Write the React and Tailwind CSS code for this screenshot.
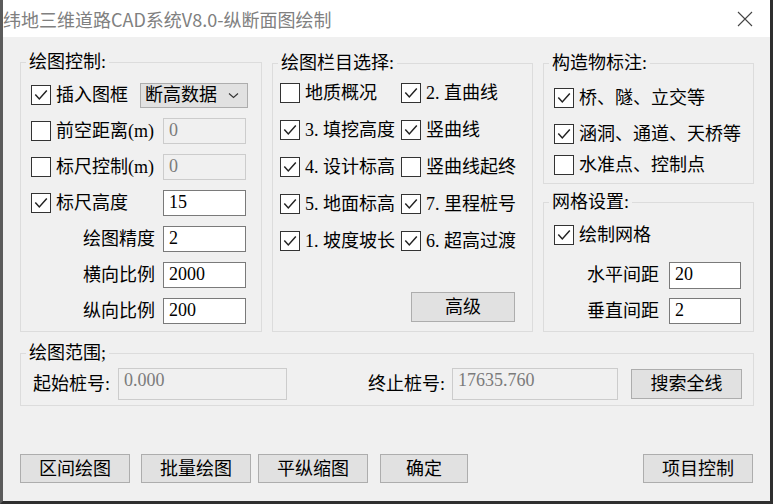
import React from "react";

function Box({ checked }) {
  return (
    <span className="w-[20px] h-[20px] border border-[#333333] bg-white flex items-center justify-center shrink-0">
      {checked && (
        <svg width="18" height="18" viewBox="0 0 18 18">
          <path d="M3.3 8.6 L7.3 13 L14.8 4.6" fill="none" stroke="#222222" strokeWidth="1.5" />
        </svg>
      )}
    </span>
  );
}

function Group({ title, className, children }) {
  return (
    <div className={`relative border border-[#dcdcdc] ${className}`}>
      <span className="absolute left-[5px] top-[-10px] px-[3px] bg-[#f0f0f0] text-[18px] leading-[18px] whitespace-nowrap">
        {title}
      </span>
      {children}
    </div>
  );
}

function Field({ value, disabled, className = "" }) {
  return (
    <div
      className={`h-[26px] border flex items-center pl-[5px] pb-[3px] text-[18px] leading-[18px] shrink-0 ${
        disabled ? "bg-[#f0f0f0] border-[#cccccc] text-[#7b7b7b]" : "bg-white border-[#7a7a7a] text-black"
      } ${className}`}
    >
      {value}
    </div>
  );
}

function Check({ checked, label }) {
  return (
    <div className="flex items-center h-[20px]">
      <Box checked={checked} />
      <span className="ml-[5px] text-[18px] leading-[20px] whitespace-nowrap">{label}</span>
    </div>
  );
}

function Btn({ children, className = "" }) {
  return (
    <div
      className={`bg-[#e1e1e1] border border-[#adadad] flex items-center justify-center text-[18px] leading-[18px] shrink-0 ${className}`}
    >
      {children}
    </div>
  );
}

export default function App() {
  return (
    <div className="w-[773px] h-[504px] bg-[#f0f0f0] flex flex-col border-l-[3px] border-r-[3px] border-b-[3px] border-l-[#5b5b5b] border-r-[#2f2f2f] border-b-[#2f2f2f] text-black font-['Liberation_Serif','Noto_Sans_CJK_SC',serif] overflow-hidden">
      {/* Title bar */}
      <div className="h-[37px] bg-white flex items-center shrink-0 pr-[17px]">
        <span className="text-[18px] leading-[20px] text-[#808080] font-['Noto_Sans_CJK_SC',sans-serif] whitespace-nowrap">
          纬地三维道路CAD系统V8.0-纵断面图绘制
        </span>
        <svg className="ml-auto" width="16" height="16" viewBox="0 0 16 16">
          <path d="M1 1 L15 15 M15 1 L1 15" stroke="#444444" strokeWidth="1.1" fill="none" />
        </svg>
      </div>

      {/* Body */}
      <div className="flex-1 flex flex-col pl-[17px] pr-[16px] pt-[25px]">
        <div className="flex h-[270px] shrink-0">
          {/* 绘图控制 */}
          <Group title="绘图控制:" className="w-[242px] h-[270px] shrink-0">
            <div className="flex flex-col gap-[10px] pt-[19px] pl-[10px] pr-[15px]">
              <div className="flex items-center h-[26px]">
                <Check checked label="插入图框" />
                <div className="ml-auto mr-[-2px] w-[108px] h-[25px] bg-[#e1e1e1] border border-[#adadad] flex items-center pl-[4px] pr-[8px] text-[18px] leading-[18px]">
                  <span>断高数据</span>
                  <svg className="ml-auto" width="11" height="7" viewBox="0 0 11 7">
                    <path d="M1 1.5 L5.5 5.5 L10 1.5" stroke="#333333" strokeWidth="1.1" fill="none" />
                  </svg>
                </div>
              </div>
              <div className="flex items-center h-[26px]">
                <Check label="前空距离(m)" />
                <Field value="0" disabled className="ml-auto w-[83px]" />
              </div>
              <div className="flex items-center h-[26px]">
                <Check label="标尺控制(m)" />
                <Field value="0" disabled className="ml-auto w-[83px]" />
              </div>
              <div className="flex items-center h-[26px]">
                <Check checked label="标尺高度" />
                <Field value="15" className="ml-auto w-[83px]" />
              </div>
              <div className="flex items-center justify-end h-[26px] gap-[8px]">
                <span className="text-[18px] leading-[20px]">绘图精度</span>
                <Field value="2" className="w-[83px]" />
              </div>
              <div className="flex items-center justify-end h-[26px] gap-[8px]">
                <span className="text-[18px] leading-[20px]">横向比例</span>
                <Field value="2000" className="w-[83px]" />
              </div>
              <div className="flex items-center justify-end h-[26px] gap-[8px]">
                <span className="text-[18px] leading-[20px]">纵向比例</span>
                <Field value="200" className="w-[83px]" />
              </div>
            </div>
          </Group>

          {/* 绘图栏目选择 */}
          <Group title="绘图栏目选择:" className="ml-[10px] mt-[1px] w-[261px] h-[269px] shrink-0 flex flex-col">
            <div className="grid grid-cols-[121px_auto] gap-y-[17px] pt-[19px] pl-[7px]">
              <Check label="地质概况" />
              <Check checked label="2. 直曲线" />
              <Check checked label="3. 填挖高度" />
              <Check checked label="竖曲线" />
              <Check checked label="4. 设计标高" />
              <Check label="竖曲线起终" />
              <Check checked label="5. 地面标高" />
              <Check checked label="7. 里程桩号" />
              <Check checked label="1. 坡度坡长" />
              <Check checked label="6. 超高过渡" />
            </div>
            <Btn className="mt-auto self-end mr-[17px] mb-[9px] w-[104px] h-[30px]">高级</Btn>
          </Group>

          {/* Right column */}
          <div className="ml-[10px] w-[211px] flex flex-col shrink-0">
            <Group title="构造物标注:" className="mt-[1px] h-[121px]">
              <div className="flex flex-col pt-[24px] pl-[10px]">
                <Check checked label="桥、隧、立交等" />
                <div className="mt-[16px]">
                  <Check checked label="涵洞、通道、天桥等" />
                </div>
                <div className="mt-[11px]">
                  <Check label="水准点、控制点" />
                </div>
              </div>
            </Group>
            <Group title="网格设置:" className="mt-[18px] h-[130px]">
              <div className="flex flex-col pt-[22px] pl-[10px] pr-[12px]">
                <Check checked label="绘制网格" />
                <div className="mt-[17px] flex items-center justify-end h-[26px] gap-[10px]">
                  <span className="text-[18px] leading-[20px]">水平间距</span>
                  <Field value="20" className="w-[72px] h-[27px]" />
                </div>
                <div className="mt-[10px] flex items-center justify-end h-[26px] gap-[10px]">
                  <span className="text-[18px] leading-[20px]">垂直间距</span>
                  <Field value="2" className="w-[72px]" />
                </div>
              </div>
            </Group>
          </div>
        </div>

        {/* 绘图范围 */}
        <Group title="绘图范围;" className="mt-[21px] h-[53px] shrink-0">
          <div className="flex items-center h-[32px] mt-[14px] pl-[12px] pr-[11px]">
            <span className="text-[18px] leading-[20px] whitespace-nowrap">起始桩号:</span>
            <div className="ml-[8px] w-[169px] h-[32px] bg-[#f0f0f0] border border-[#cccccc] flex items-center pl-[5px] pb-[8px] text-[18px] leading-[18px] text-[#7b7b7b]">
              0.000
            </div>
            <span className="ml-auto text-[18px] leading-[20px] whitespace-nowrap">终止桩号:</span>
            <div className="ml-[7px] w-[166px] h-[32px] bg-[#f0f0f0] border border-[#cccccc] flex items-center pl-[5px] pb-[8px] text-[18px] leading-[18px] text-[#7b7b7b]">
              17635.760
            </div>
            <Btn className="ml-[13px] w-[111px] h-[30px]">搜索全线</Btn>
          </div>
        </Group>

        {/* Bottom buttons */}
        <div className="mt-[48px] flex h-[29px] shrink-0">
          <Btn className="w-[110px] h-[29px]">区间绘图</Btn>
          <Btn className="ml-[11px] w-[110px] h-[29px]">批量绘图</Btn>
          <Btn className="ml-[7px] w-[110px] h-[29px]">平纵缩图</Btn>
          <Btn className="ml-[12px] w-[88px] h-[29px]">确定</Btn>
          <Btn className="ml-auto mr-[1px] w-[110px] h-[29px]">项目控制</Btn>
        </div>
      </div>
    </div>
  );
}
